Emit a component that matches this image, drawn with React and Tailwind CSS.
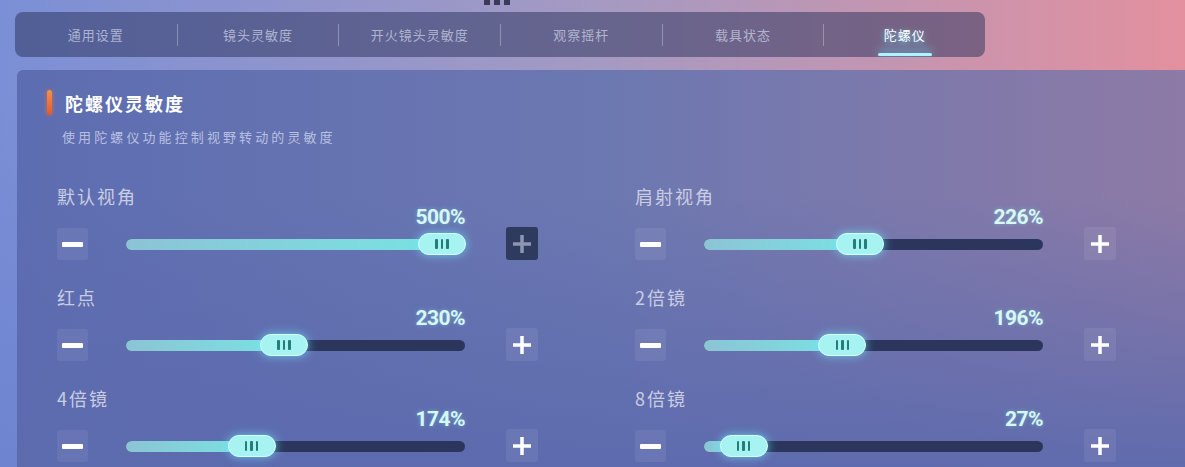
import React from 'react';

const tabs = ['通用设置', '镜头灵敏度', '开火镜头灵敏度', '观察摇杆', '载具状态', '陀螺仪'];

const rows = [
  [
    { label: '默认视角', value: 500, maxed: true },
    { label: '肩射视角', value: 226 },
  ],
  [
    { label: '红点', value: 230 },
    { label: '2倍镜', value: 196 },
  ],
  [
    { label: '4倍镜', value: 174 },
    { label: '8倍镜', value: 27 },
  ],
];

function Slider({ label, value, maxed }) {
  const frac = value / 500;
  const thumbLeft = frac * (340 - 48);
  return (
    <div className="w-[481px] flex flex-col">
      <div className="h-[20px] text-[18px] leading-[20px] tracking-[2px] text-[#c9cde2]">{label}</div>
      <div className="flex items-end">
        {/* minus */}
        <div className="w-[31px] h-[32px] rounded-[3px] bg-white/[0.07] flex items-center justify-center">
          <div className="w-[21px] h-[5px] rounded-[1px] bg-white" />
        </div>

        <div className="ml-[38px] w-[340px] flex flex-col">
          <div className="h-[22px] text-right font-['Roboto',sans-serif] font-bold text-[21px] leading-[22px] tracking-[-0.5px] text-[#d8f7f5] [text-shadow:0_0_4px_rgba(120,240,240,0.45)]">
            {value}%
          </div>
          <div className="h-[32px] relative flex items-center">
            <div className="w-full h-[11px] rounded-full bg-[#2c365d]" />
            <div
              className="absolute left-0 top-[10.5px] h-[11px] rounded-full bg-[linear-gradient(to_right,#8cc4d4,#79e2e3)]"
              style={{ width: thumbLeft + 24 }}
            />
            <div
              className="absolute top-[5px] w-[48px] h-[22px] rounded-full bg-[#a6f3f2] border-[1.5px] border-[#d6ffff] shadow-[0_0_10px_rgba(110,235,255,0.7)] flex items-center justify-center gap-[3px]"
              style={{ left: thumbLeft }}
            >
              <div className="w-[2.5px] h-[10px] rounded-[1px] bg-[#237d7b]" />
              <div className="w-[2.5px] h-[10px] rounded-[1px] bg-[#237d7b]" />
              <div className="w-[2.5px] h-[10px] rounded-[1px] bg-[#237d7b]" />
            </div>
          </div>
        </div>

        {/* plus */}
        {maxed ? (
          <div className="ml-[41px] w-[32px] h-[33px] rounded-[3px] bg-[#2f3a5f] flex items-center justify-center">
            <svg width="20" height="20" viewBox="0 0 20 20">
              <path d="M10 1v18M1 10h18" stroke="#8d96b2" strokeWidth="3.5" />
            </svg>
          </div>
        ) : (
          <div className="ml-[41px] w-[32px] h-[33px] rounded-[3px] bg-white/[0.07] flex items-center justify-center">
            <svg width="20" height="20" viewBox="0 0 20 20">
              <path d="M10 1v18M1 10h18" stroke="#ffffff" strokeWidth="3.5" />
            </svg>
          </div>
        )}
      </div>
    </div>
  );
}

export default function App() {
  return (
    <div className="w-[1185px] h-[467px] overflow-hidden relative flex flex-col font-['Noto_Sans_CJK_SC',sans-serif] bg-[linear-gradient(to_bottom,transparent_20%,#6e84d0_100%),linear-gradient(to_right,#7b8fd6,#a49ac3_50%,#e3909e)]">
      {/* top dots */}
      <div className="absolute top-0 left-[484px] flex gap-[4px]">
        <div className="w-[6px] h-[5px] bg-[#3b3a58]" />
        <div className="w-[6px] h-[5px] bg-[#3b3a58]" />
        <div className="w-[6px] h-[5px] bg-[#3b3a58]" />
      </div>

      {/* tab bar */}
      <div className="shrink-0 ml-[15px] mt-[12px] w-[970px] h-[45px] rounded-[8px] bg-[#28305a]/50 flex items-center">
        {tabs.map((t, i) => (
          <div key={t} className="flex-1 h-full flex items-center relative">
            {i > 0 && <div className="w-px h-[22px] bg-white/30" />}
            <div className="flex-1 h-full flex items-center justify-center relative">
              {i === tabs.length - 1 ? (
                <>
                  <span className="text-[13px] tracking-[1px] text-white [text-shadow:0_2px_6px_rgba(100,230,255,0.9)]">{t}</span>
                  <div className="absolute bottom-[1px] left-1/2 -translate-x-1/2 w-[54px] h-[3px] rounded-full bg-[#aef4ff] shadow-[0_-3px_8px_rgba(100,220,255,0.8)]" />
                </>
              ) : (
                <span className="text-[13px] tracking-[1px] text-[#c6cae0]/80">{t}</span>
              )}
            </div>
          </div>
        ))}
      </div>

      {/* panel */}
      <div className="shrink-0 ml-[17px] mt-[13px] h-[420px] rounded-tl-[6px] bg-[linear-gradient(to_bottom,transparent_30%,#5c6aae_100%),linear-gradient(to_right,#5d6db1,#6c78b1_50%,#8d7aa6)] pt-[20px]">
        <div className="pl-[30px] flex items-center">
          <div className="w-[5px] h-[25px] rounded-full bg-[linear-gradient(to_bottom,#f59048,#e4582c)] shadow-[0_0_5px_rgba(255,120,60,0.6)]" />
          <div className="ml-[13px] text-[18px] leading-[22px] font-bold tracking-[2px] text-white">陀螺仪灵敏度</div>
        </div>
        <div className="pl-[45px] mt-[13px] text-[13px] leading-[18px] tracking-[3.1px] text-[#c4cbe8]/90">
          使用陀螺仪功能控制视野转动的灵敏度
        </div>

        <div className="pl-[40px] mt-[40px] flex flex-col gap-[27px]">
          {rows.map((r, i) => (
            <div key={i} className="flex gap-[97px]">
              {r.map((s) => (
                <Slider key={s.label} {...s} />
              ))}
            </div>
          ))}
        </div>
      </div>
    </div>
  );
}
